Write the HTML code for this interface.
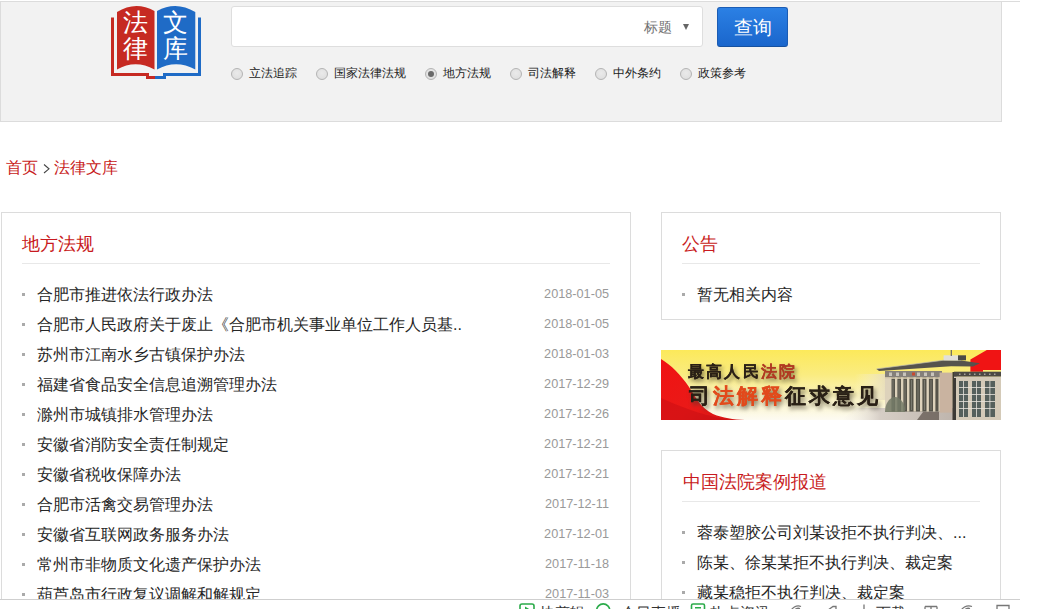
<!DOCTYPE html>
<html>
<head>
<meta charset="utf-8">
<style>
*{margin:0;padding:0;box-sizing:border-box;}
html,body{width:1043px;height:609px;overflow:hidden;background:#fff;}
body{position:relative;font-family:"Liberation Sans",sans-serif;color:#333;}
.abs{position:absolute;}
#topline{left:0;top:1px;width:1020px;height:1px;background:#dcdcdc;}
#header{left:0;top:1px;width:1002px;height:121px;background:#f2f2f2;border:1px solid #dcdcdc;}
#logo{left:100px;top:0;width:110px;height:90px;}
#search{left:231px;top:6px;width:472px;height:41px;background:#fff;border:1px solid #dedede;border-radius:3px;}
#stype{left:644px;top:17px;font-size:14px;line-height:20px;color:#707070;white-space:nowrap;}
#tri{left:683px;top:24px;width:0;height:0;border-left:3.5px solid transparent;border-right:3.5px solid transparent;border-top:6px solid #666;}
#btn{left:717px;top:7px;width:71px;height:40px;border:1px solid #1b5cb4;border-bottom-color:#16519f;border-radius:3px;background:linear-gradient(#2b80e4,#1a66cc);color:#fff;font-size:19px;line-height:39px;text-align:center;}
.radio{top:68px;width:12px;height:12px;border-radius:50%;border:1px solid #b4b4b4;background:radial-gradient(circle at 50% 40%,#eaeaea,#dcdcdc);}
.radio.on::after{content:"";position:absolute;left:2px;top:2px;width:6px;height:6px;border-radius:50%;background:#6a6a6a;}
.rlabel{top:65px;font-size:12px;line-height:16px;color:#222;white-space:nowrap;}
#crumb,.crumb2{left:6px;top:158px;font-size:16px;line-height:20px;color:#c81a20;white-space:nowrap;}
.panel{border:1px solid #dcdcdc;background:#fff;}
.ptitle{font-size:18px;line-height:22px;color:#c81a20;white-space:nowrap;}
.psep{height:1px;background:#e8e8e8;}
.item{font-size:16px;line-height:20px;color:#262626;white-space:nowrap;}
.dot{width:3px;height:3px;background:#aaa;}
.date{font-size:12.7px;line-height:16px;color:#999;white-space:nowrap;}
.stext{top:4px;font-size:14.5px;line-height:18px;color:#333;white-space:nowrap;}
#status{left:0;top:599px;width:1020px;height:10px;background:#fff;border-top:1px solid #cfcfcf;overflow:hidden;}
</style>
</head>
<body>
<div id="topline" class="abs"></div>
<div id="header" class="abs"></div>

<svg id="logo" class="abs" viewBox="100 0 110 90" width="110" height="90">
  <!-- frames -->
  <path d="M111 17.5 H114 V73 H149 V76 H155 V79 H146 V76 H111 Z" fill="#c62a22"/>
  <path d="M201 17.5 H198 V73 H163 V76 H155 V79 H166 V76 H201 Z" fill="#1f6bc6"/>
  <!-- pages -->
  <path d="M117 12 Q135.5 0.5 154.5 11 V69.5 Q135.5 59 117 69.5 Z" fill="#c62a22"/>
  <path d="M157 11 Q176 0.5 195.3 12 V69.5 Q176 59 157 69.5 Z" fill="#1f6bc6"/>
  <text x="135.2" y="30.6" font-size="25" fill="#fff" text-anchor="middle" font-weight="500" font-family="Liberation Sans, sans-serif">法</text>
  <text x="135.2" y="57.3" font-size="25" fill="#fff" text-anchor="middle" font-weight="500" font-family="Liberation Sans, sans-serif">律</text>
  <text x="175.7" y="30.6" font-size="25" fill="#fff" text-anchor="middle" font-weight="500" font-family="Liberation Sans, sans-serif">文</text>
  <text x="175.7" y="57.3" font-size="25" fill="#fff" text-anchor="middle" font-weight="500" font-family="Liberation Sans, sans-serif">库</text>
</svg>

<div id="search" class="abs"></div>
<div id="stype" class="abs">标题</div>
<div id="tri" class="abs"></div>
<div id="btn" class="abs">查询</div>

<div class="abs radio" style="left:231px"></div><div class="abs rlabel" style="left:249px">立法追踪</div>
<div class="abs radio" style="left:316px"></div><div class="abs rlabel" style="left:334px">国家法律法规</div>
<div class="abs radio on" style="left:425px"></div><div class="abs rlabel" style="left:443px">地方法规</div>
<div class="abs radio" style="left:510px"></div><div class="abs rlabel" style="left:528px">司法解释</div>
<div class="abs radio" style="left:595px"></div><div class="abs rlabel" style="left:613px">中外条约</div>
<div class="abs radio" style="left:680px"></div><div class="abs rlabel" style="left:698px">政策参考</div>

<div id="crumb" class="abs">首页</div><div class="abs crumb2" style="left:54px;">法律文库</div>
<svg class="abs" style="left:42px;top:162px;" width="10" height="13" viewBox="0 0 10 13"><polyline points="2,2.5 7,6.8 2,11" fill="none" stroke="#444" stroke-width="1.1"/></svg>

<!-- left panel -->
<div class="abs panel" style="left:1px;top:212px;width:630px;height:420px;"></div>
<div class="abs ptitle" style="left:22px;top:233px;">地方法规</div>
<div class="abs psep" style="left:22px;top:263px;width:588px;"></div>
<div class="abs dot" style="left:22px;top:293px;"></div><div class="abs item" style="left:37px;top:285px;">合肥市推进依法行政办法</div><div class="abs date" style="right:434px;top:286px;">2018-01-05</div>
<div class="abs dot" style="left:22px;top:323px;"></div><div class="abs item" style="left:37px;top:315px;">合肥市人民政府关于废止《合肥市机关事业单位工作人员基..</div><div class="abs date" style="right:434px;top:316px;">2018-01-05</div>
<div class="abs dot" style="left:22px;top:353px;"></div><div class="abs item" style="left:37px;top:345px;">苏州市江南水乡古镇保护办法</div><div class="abs date" style="right:434px;top:346px;">2018-01-03</div>
<div class="abs dot" style="left:22px;top:383px;"></div><div class="abs item" style="left:37px;top:375px;">福建省食品安全信息追溯管理办法</div><div class="abs date" style="right:434px;top:376px;">2017-12-29</div>
<div class="abs dot" style="left:22px;top:413px;"></div><div class="abs item" style="left:37px;top:405px;">滁州市城镇排水管理办法</div><div class="abs date" style="right:434px;top:406px;">2017-12-26</div>
<div class="abs dot" style="left:22px;top:443px;"></div><div class="abs item" style="left:37px;top:435px;">安徽省消防安全责任制规定</div><div class="abs date" style="right:434px;top:436px;">2017-12-21</div>
<div class="abs dot" style="left:22px;top:473px;"></div><div class="abs item" style="left:37px;top:465px;">安徽省税收保障办法</div><div class="abs date" style="right:434px;top:466px;">2017-12-21</div>
<div class="abs dot" style="left:22px;top:503px;"></div><div class="abs item" style="left:37px;top:495px;">合肥市活禽交易管理办法</div><div class="abs date" style="right:434px;top:496px;">2017-12-11</div>
<div class="abs dot" style="left:22px;top:533px;"></div><div class="abs item" style="left:37px;top:525px;">安徽省互联网政务服务办法</div><div class="abs date" style="right:434px;top:526px;">2017-12-01</div>
<div class="abs dot" style="left:22px;top:563px;"></div><div class="abs item" style="left:37px;top:555px;">常州市非物质文化遗产保护办法</div><div class="abs date" style="right:434px;top:556px;">2017-11-18</div>
<div class="abs dot" style="left:22px;top:593px;"></div><div class="abs item" style="left:37px;top:585px;">葫芦岛市行政复议调解和解规定</div><div class="abs date" style="right:434px;top:586px;">2017-11-03</div>

<!-- right panels -->
<div class="abs panel" style="left:661px;top:212px;width:340px;height:108px;"></div>
<div class="abs ptitle" style="left:682px;top:233px;">公告</div>
<div class="abs psep" style="left:682px;top:263px;width:298px;"></div>
<div class="abs dot" style="left:682px;top:293px;"></div>
<div class="abs item" style="left:697px;top:285px;">暂无相关内容</div>

<svg id="banner" class="abs" style="left:661px;top:350px;" width="340" height="70" viewBox="0 0 340 70">
<defs>
<linearGradient id="bgY" x1="0" y1="0" x2="0" y2="1">
<stop offset="0" stop-color="#fce95a"/><stop offset="0.35" stop-color="#faec80"/><stop offset="0.7" stop-color="#fbf4c6"/><stop offset="1" stop-color="#fdfbf2"/>
</linearGradient>
<linearGradient id="redG" x1="0" y1="0" x2="1" y2="1">
<stop offset="0" stop-color="#f01212"/><stop offset="0.6" stop-color="#ea1a18"/><stop offset="1" stop-color="#d01414"/>
</linearGradient>
<filter id="sh" x="-10%" y="-30%" width="130%" height="180%" color-interpolation-filters="sRGB">
<feGaussianBlur in="SourceAlpha" stdDeviation="2.2" result="bl"/><feOffset in="bl" dx="2" dy="3" result="of"/>
<feColorMatrix in="of" type="matrix" values="0 0 0 0 0.25  0 0 0 0 0.22  0 0 0 0 0.18  0 0 0 0.6 0" result="sc"/>
<feMerge><feMergeNode in="sc"/><feMergeNode in="SourceGraphic"/></feMerge>
</filter>
<linearGradient id="fadeL" x1="0" y1="0" x2="1" y2="0">
<stop offset="0" stop-color="#fbf6dc" stop-opacity="0"/><stop offset="1" stop-color="#e6dcc0" stop-opacity="1"/>
</linearGradient>
<linearGradient id="groundG" x1="0" y1="0" x2="1" y2="0">
<stop offset="0" stop-color="#f4efe6" stop-opacity="0"/><stop offset="0.3" stop-color="#d6cec6"/><stop offset="1" stop-color="#b8aea6"/>
</linearGradient>
</defs>
<rect width="340" height="70" fill="url(#bgY)"/>
<!-- red swoosh -->
<path d="M0 9 C10 15 20 25 28 37 C35 48 40 58 52 64 C62 68 72 69.5 84 70 L0 70 Z" fill="url(#redG)"/>
<path d="M0 48 C18 56 34 62 50 66 C58 68 66 69.5 72 70 L0 70 Z" fill="#b80a10" opacity="0.35"/>
<!-- red corner -->
<path d="M325.8 0 H340 V20 H322 V21.7 H309.4 V9.5 Z" fill="#f01414"/>
<!-- faded left wing -->
<rect x="194" y="24" width="30" height="26" fill="url(#fadeL)" opacity="0.85"/>
<!-- ground -->
<path d="M180 70 L196 58 L300 58 L312 70 Z" fill="url(#groundG)"/>
<path d="M256 70 L262 62 L278 62 L278 70 Z" fill="#5a5048" opacity="0.7"/>
<!-- main roof -->
<path d="M215.5 18.9 L283 10.2 L300 10.5 L319 13.2 L312 16.5 L290 16.2 L218 21 Z" fill="#56534d"/>
<path d="M215.5 18.9 L283 10.2 L300 10.5" fill="none" stroke="#b8b4ac" stroke-width="0.7"/>
<rect x="282.6" y="5.3" width="15" height="5" fill="#e2e0da"/>
<rect x="297" y="5.3" width="8" height="5" fill="#4a4a46"/>
<rect x="289.7" y="0" width="1.2" height="6" fill="#666"/>
<!-- frieze -->
<rect x="224" y="21" width="57" height="6.5" fill="#85807a"/>
<g fill="#c8c4bc"><rect x="228" y="22.5" width="3" height="3.5"/><rect x="235" y="22.5" width="3" height="3.5"/><rect x="242" y="22.5" width="3" height="3.5"/><rect x="256" y="22.5" width="3" height="3.5"/><rect x="263" y="22.5" width="3" height="3.5"/><rect x="270" y="22.5" width="3" height="3.5"/></g>
<rect x="251" y="22.5" width="3" height="3" fill="#c84a30"/>
<!-- facade -->
<rect x="224" y="27.4" width="56" height="34.2" fill="#56544a"/><g fill="#8a8a80" opacity="0.7"><rect x="231.5" y="30" width="1" height="30"/><rect x="237.5" y="30" width="1" height="30"/><rect x="243.5" y="30" width="1" height="30"/><rect x="250" y="30" width="1" height="30"/><rect x="256.5" y="30" width="1" height="30"/><rect x="263" y="30" width="1" height="30"/><rect x="269.5" y="30" width="1" height="30"/></g>
<g fill="#ddd2bb">
<rect x="224" y="27.4" width="6.5" height="34.2"/><rect x="234" y="27.4" width="2.4" height="34.2"/><rect x="240" y="27.4" width="2.4" height="34.2"/>
<rect x="246" y="27.4" width="2.4" height="34.2"/><rect x="252.5" y="27.4" width="2.4" height="34.2"/><rect x="259" y="27.4" width="2.4" height="34.2"/>
<rect x="265.5" y="27.4" width="2.4" height="34.2"/><rect x="272" y="27.4" width="2.4" height="34.2"/><rect x="277.5" y="27.4" width="2.5" height="34.2"/>
</g>
<rect x="224" y="27.4" width="56" height="1.4" fill="#d8ccb4"/>
<!-- tree -->
<path d="M224 62 C224 54 228 48 233 47 C238 46 243 52 244 58 L244 62 Z" fill="#737a66" opacity="0.85"/>
<!-- tower -->
<rect x="278.6" y="22.6" width="13" height="40" fill="#c9b3a0"/>
<rect x="291.5" y="22" width="4" height="48" fill="#3e3a34"/>
<!-- right wing -->
<rect x="293" y="21.7" width="47" height="5" fill="#4c4944"/><g fill="#a8a49c"><rect x="298" y="23.5" width="1.5" height="1.5"/><rect x="303" y="23.5" width="1.5" height="1.5"/><rect x="308" y="23.5" width="1.5" height="1.5"/><rect x="313" y="23.5" width="1.5" height="1.5"/><rect x="318" y="23.5" width="1.5" height="1.5"/><rect x="323" y="23.5" width="1.5" height="1.5"/><rect x="328" y="23.5" width="1.5" height="1.5"/><rect x="333" y="23.5" width="1.5" height="1.5"/></g>
<rect x="293" y="26.7" width="47" height="43.3" fill="#d4cab8"/>
<g fill="#55605c">
<rect x="298" y="31" width="9" height="36"/><rect x="311" y="31" width="9" height="36"/><rect x="324" y="31" width="10" height="36"/>
</g>
<g fill="#e8e4dc">
<rect x="298" y="37" width="36" height="0.8"/><rect x="298" y="44" width="36" height="0.8"/><rect x="298" y="51" width="36" height="0.8"/><rect x="298" y="58" width="36" height="0.8"/>
<rect x="302" y="31" width="0.8" height="36"/><rect x="315" y="31" width="0.8" height="36"/><rect x="328.5" y="31" width="0.8" height="36"/>
</g>
<rect x="293" y="28" width="2" height="42" fill="#3c3a36"/>
<!-- text -->
<g filter="url(#sh)" font-family="Liberation Sans, sans-serif" font-weight="900" stroke-width="0.1">
<text x="27" y="26.5" font-size="16" letter-spacing="2.2"><tspan fill="#2a2016" stroke="#2a2016">最高人民</tspan><tspan fill="#b03a22" stroke="#b03a22">法院</tspan></text>
<text x="27.5" y="53.3" font-size="21" letter-spacing="3"><tspan fill="#2a2016" stroke="#2a2016">司</tspan><tspan fill="#e24a1c" stroke="#e24a1c">法解释</tspan><tspan fill="#2a2016" stroke="#2a2016">征求意见</tspan></text>
</g>
</svg>

<div class="abs panel" style="left:661px;top:450px;width:340px;height:200px;"></div>
<div class="abs ptitle" style="left:683px;top:471px;">中国法院案例报道</div>
<div class="abs psep" style="left:682px;top:501px;width:298px;"></div>
<div class="abs dot" style="left:682px;top:531px;"></div><div class="abs item" style="left:697px;top:523px;">蓉泰塑胶公司刘某设拒不执行判决、...</div>
<div class="abs dot" style="left:682px;top:561px;"></div><div class="abs item" style="left:697px;top:553px;">陈某、徐某某拒不执行判决、裁定案</div>
<div class="abs dot" style="left:682px;top:591px;"></div><div class="abs item" style="left:697px;top:583px;">藏某稳拒不执行判决、裁定案</div>

<div id="status" class="abs">
<svg class="abs" style="left:0;top:0" width="1020" height="11" viewBox="0 600 1020 11">
<g fill="none" stroke="#2bab4a" stroke-width="1.6">
<rect x="520" y="604" width="14" height="13" rx="2"/>
<circle cx="603.2" cy="610.5" r="6.6"/>
<rect x="691.5" y="604" width="13" height="13" rx="1.5"/>
</g>
<path d="M525 606.5 L530 609.5 L525 612.5 Z" fill="#2bab4a"/>
<rect x="695" y="607" width="6" height="1.5" fill="#2bab4a"/>
<g fill="none" stroke="#777" stroke-width="1.3" transform="translate(0,1.5)">
<path d="M790 612 C791 606 797 603 801 605"/><path d="M793 612 C794 608 797 606 800 607"/>
<path d="M826 610 L833 605 L836 605 L836 612"/>
<path d="M864 603 V612"/>
<path d="M925 605 H937 M931 605 V612 M925 605 V612 M937 605 V612"/>
<path d="M960 612 C961 606 967 603 972 605"/><path d="M963 612 C964 608 967 606 970 607"/>
<path d="M997 612 V604 H1009 V612"/>
</g>
</svg>
<div class="abs stext" style="left:540px">快剪辑</div>
<div class="abs stext" style="left:621px">今日直播</div>
<div class="abs stext" style="left:710px">热点资讯</div>
<div class="abs stext" style="left:876px">下载</div>
</div>
</body>
</html>
